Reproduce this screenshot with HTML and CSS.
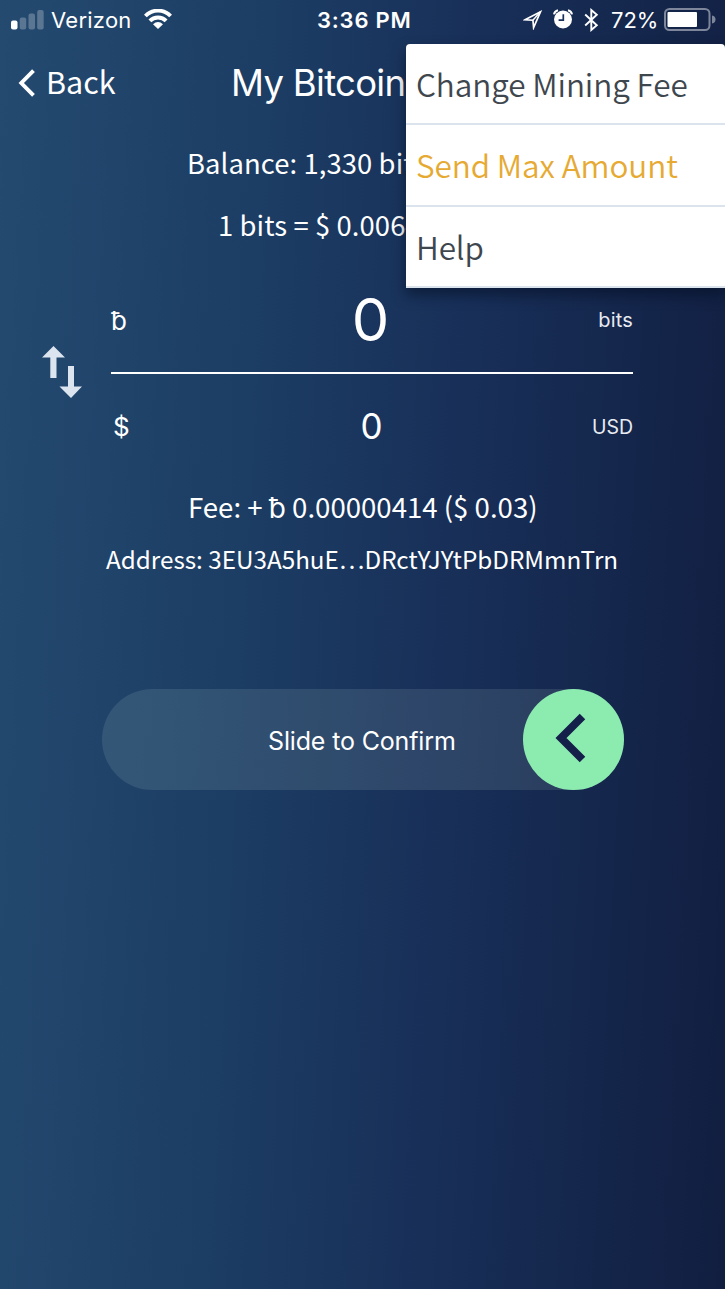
FILE: index.html
```html
<!DOCTYPE html>
<html lang="en">
<head>
<meta charset="utf-8">
<title>My Bitcoin</title>
<link rel="stylesheet" href="styles.css">
</head>
<body>
<main class="screen">
  <header class="status">
    <svg class="signal" width="34" height="20" viewBox="0 0 34 20"><rect x="0" y="10.500" width="6.500" height="9" rx="2" fill="#fff"/><g fill="#fff" fill-opacity=".25"><rect x="8.700" y="7.500" width="6.500" height="12" rx="2"/><rect x="17.500" y="3.500" width="6.500" height="16" rx="2"/><rect x="26.200" y="0" width="6.500" height="19.500" rx="2"/></g></svg>
    <span class="carrier">Verizon</span>
    <svg class="wifi" width="28" height="20" viewBox="0 0 28 20"><g fill="none" stroke="#fff" stroke-width="3.900"><path d="M1.400 7C8.500-.2 19.500-.2 26.600 7"/><path d="M5.900 11.900C10.300 7.300 17.700 7.300 22.100 11.900"/></g><path d="M9 15.200Q14 10.800 19 15.200L14 20Z" fill="#fff"/></svg>
    <span class="time">3:36 PM</span>
    <svg class="location" width="20" height="20" viewBox="0 0 20 20"><path d="M2 9.800L17.500 1.800L10.600 17.600L9.900 10.200Z" fill="none" stroke="#fff" stroke-width="1.700"/><path d="M17.500 1.800L9.900 10.200" stroke="#fff" stroke-width="1.500"/></svg>
    <svg class="alarm" width="20" height="20" viewBox="0 0 20 20"><circle cx="10" cy="10.500" r="9" fill="#fff"/><path d="M1 5.300Q1.500 2 5 1.200M15 1.200Q18.500 2 19 5.300" fill="none" stroke="#fff" stroke-width="2"/><path d="M10.300 5.200V11.200H5.600" fill="none" stroke="#18305b" stroke-width="1.700"/></svg>
    <svg class="bluetooth" width="15" height="24" viewBox="0 0 15 24"><path d="M1.200 6.500L12.800 17.300L7.300 22V2L12.800 6.700L1.200 17.500" fill="none" stroke="#fff" stroke-width="1.900"/></svg>
    <span class="percent">72%</span>
    <svg class="battery" width="52" height="24" viewBox="0 0 52 24"><rect x="1" y="1" width="44.500" height="21" rx="4.500" fill="none" stroke="#fff" stroke-opacity=".45" stroke-width="2"/><rect x="3.500" y="4" width="29.500" height="15" rx="1" fill="#fff"/><path d="M48 7.500Q51.500 8 51.500 11.500T48 15.500Z" fill="#fff" fill-opacity=".45"/></svg>
  </header>

  <nav class="nav">
    <svg class="back-icon" width="18" height="28" viewBox="0 0 18 28"><path d="M15.500 1.700L3.300 14L15.500 26.300" fill="none" stroke="#fff" stroke-width="3.900"/></svg>
    <span class="back">Back</span>
    <h1 class="title">My Bitcoin</h1>
  </nav>

  <p class="balance">Balance: 1,330 bits</p>
  <p class="rate">1 bits = $ 0.0064</p>

  <section class="exchange">
    <svg class="swap" width="40" height="52" viewBox="0 0 40 52"><path d="M11.500 0L23 11.500H14.500V32H8.300V11.500H0Z M26 20H32V40.500H40L29 52L17.500 40.500H26Z" fill="#dce4ef"/></svg>
    <div class="amounts">
      <div class="row row-primary"><span class="symbol">ƀ</span><span class="value value-large">0</span><span class="unit">bits</span></div>
      <div class="row row-secondary"><span class="symbol dollar">$</span><span class="value">0</span><span class="unit usd">USD</span></div>
    </div>
  </section>

  <p class="fee">Fee: + <span class="bit">ƀ</span> 0.00000414 ($ 0.03)</p>
  <p class="address">Address: 3EU3A5huE…DRctYJYtPbDRMmnTrn</p>

  <div class="slider">
    <span class="slider-label">Slide to Confirm</span>
    <span class="thumb"><svg width="32" height="52" viewBox="0 0 32 52"><path d="M27.500 4.500L6 26L27.500 47.500" fill="none" stroke="#14204a" stroke-width="7.800"/></svg></span>
  </div>

  <div class="menu">
    <div class="item change">Change Mining Fee</div>
    <div class="item max">Send Max Amount</div>
    <div class="item help">Help</div>
  </div>
</main>
</body>
</html>
```
FILE: styles.css
```css
* { box-sizing: border-box; }
body { margin: 0; }
p, h1 { margin: 0; font-weight: 400; }
svg { display: block; flex: none; }

.screen {
  position: relative;
  width: 725px;
  height: 1289px;
  overflow: hidden;
  color: #fff;
  font-family: "Noto Sans CJK SC", "Inter", sans-serif;
  white-space: nowrap;
  background: linear-gradient(93deg, #244a70 0%, #1c3d64 34%, #182f58 62%, #111e40 100%);
}

.status {
  display: flex;
  align-items: center;
  height: 40px;
  padding-left: 11px;
  font: 22px/40px "Inter", sans-serif;
}
.signal { margin-bottom: 1px; }
.carrier { width: 81px; margin-left: 6px; letter-spacing: 0.25px; }
.wifi { margin-left: 12px; margin-bottom: 2px; }
.time { width: 95px; margin-left: 145px; font-weight: 600; letter-spacing: 0.8px; }
.location { margin-left: 111px; }
.alarm { margin-left: 10px; margin-bottom: 2px; }
.bluetooth { margin-left: 11px; margin-bottom: 1px; }
.percent { width: 48px; margin-left: 12px; }
.battery { margin-left: 5px; }

.nav { display: flex; align-items: center; height: 86px; }
.back-icon { margin-left: 18px; }
.back { width: 70px; margin-left: 10px; padding-bottom: 4px; font-size: 30.5px; line-height: 82px; }
.title { margin-left: 115px; font: 36.5px/86px "Inter", sans-serif; letter-spacing: -0.7px; }

.balance { height: 76px; padding-left: 187px; font-size: 27.4px; line-height: 72px; letter-spacing: 0.1px; }
.rate { height: 48px; padding-left: 218px; font-size: 27.4px; line-height: 44px; letter-spacing: 0.1px; }

.exchange { display: flex; height: 230px; padding-top: 18px; }
.swap { margin: 78px 29px 0 42px; }
.amounts { width: 522px; }
.row { display: grid; grid-template-columns: 1fr auto 1fr; align-items: center; font-family: "Inter", sans-serif; }
.row-primary { height: 106px; border-bottom: 2px solid #fff; }
.row-secondary { height: 106px; }
.symbol { font-size: 26px; }
.dollar { padding-left: 2px; padding-bottom: 2px; }
.value { padding: 0 1px 2px 0; font-size: 35px; }
.value-large { padding: 0 4px 2px 0; font-size: 59.5px; letter-spacing: -1px; }
.unit { justify-self: end; color: #e8ebf1; font-size: 20px; letter-spacing: 0.2px; }
.usd { font-size: 19.5px; letter-spacing: 0; }

.fee { height: 56px; padding-left: 188px; font-size: 27.6px; line-height: 52px; }
.bit { font: 28px/1 "Inter", sans-serif; }
.address { height: 48px; padding-left: 106px; font-size: 24.25px; line-height: 46px; }

.slider {
  display: flex;
  align-items: center;
  width: 522px;
  height: 101px;
  margin: 105px 0 0 101.5px;
  border-radius: 51px;
  background: rgba(225, 255, 235, 0.105);
}
.slider-label { width: 255px; margin-left: 166.5px; padding-top: 4px; font: 25px/97px "Inter", sans-serif; letter-spacing: -0.15px; }
.thumb { display: flex; align-items: center; justify-content: center; width: 101px; height: 101px; padding: 0 5px 4px 0; border-radius: 50%; background: #8cecb0; }

.menu {
  position: absolute;
  top: 44px;
  right: 0;
  width: 319px;
  height: 244px;
  border-radius: 4px 4px 0 0;
  background: #fff;
  color: #3e464e;
  box-shadow: 0 7px 14px rgba(3, 12, 32, 0.55);
}
.item { height: 81.300px; padding-left: 10px; border-bottom: 2px solid #dbe3ed; font-size: 31.5px; font-weight: 350; line-height: 78px; letter-spacing: -0.1px; }
.max { line-height: 79px; color: #e6aa33; }
```
